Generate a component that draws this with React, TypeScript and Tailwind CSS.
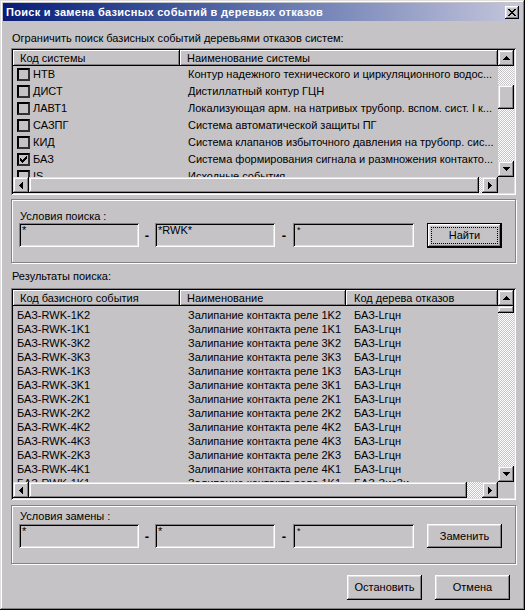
import type { ReactNode } from "react";

const raised = "shadow-[inset_-1px_-1px_#000,inset_1px_1px_#fff,inset_-2px_-2px_#848284,inset_2px_2px_#dedfde]";
const sbRaised = "shadow-[inset_-1px_-1px_#000,inset_1px_1px_#dedfde,inset_-2px_-2px_#848284,inset_2px_2px_#fff]";
const sunken = "shadow-[inset_1px_1px_#848284,inset_-1px_-1px_#fff,inset_2px_2px_#000,inset_-2px_-2px_#dedfde]";
const headerCell = "shadow-[inset_-1px_-1px_#000,inset_1px_1px_#fff,inset_-2px_-2px_#848284]";
const track = "bg-[repeating-conic-gradient(#fff_0%_25%,#c6c3c6_0%_50%)] bg-[length:2px_2px]";

const closeGlyph = ["##....##", ".##..##.", "..####..", "...##...", "..####..", ".##..##.", "##....##"];
const checkGlyph = ["......#", ".....##", "#...###", "##.###.", "#####..", ".###...", "..#...."];

function Pixels({ rows }: { rows: string[] }) {
  return (
    <svg width={rows[0].length} height={rows.length} shapeRendering="crispEdges">
      {rows.flatMap((r, y) =>
        r.split("").map((c, x) => (c === "#" ? <rect key={`${x}-${y}`} x={x} y={y} width={1} height={1} fill="#000" /> : null))
      )}
    </svg>
  );
}

type Dir = "up" | "down" | "left" | "right";

function Arrow({ dir }: { dir: Dir }) {
  const widths = [1, 3, 5, 7];
  if (dir === "up" || dir === "down") {
    return (
      <svg width="7" height="4" shapeRendering="crispEdges">
        {widths.map((w, i) => (
          <rect key={i} x={(7 - w) / 2} y={dir === "up" ? i : 3 - i} width={w} height={1} fill="#000" />
        ))}
      </svg>
    );
  }
  return (
    <svg width="4" height="7" shapeRendering="crispEdges">
      {widths.map((w, i) => (
        <rect key={i} y={(7 - w) / 2} x={dir === "left" ? i : 3 - i} height={w} width={1} fill="#000" />
      ))}
    </svg>
  );
}

function SbButton({ dir }: { dir: Dir }) {
  return (
    <div className={`flex h-4 w-4 shrink-0 items-center justify-center bg-[#c6c3c6] ${sbRaised}`}>
      <Arrow dir={dir} />
    </div>
  );
}

// sizes in px: track before thumb, thumb, track after
function VScroll({ before, thumb, after }: { before: number; thumb: number; after: number }) {
  return (
    <div className="flex w-4 shrink-0 flex-col">
      <SbButton dir="up" />
      <div className={track} style={{ height: before }} />
      <div className={`bg-[#c6c3c6] ${sbRaised}`} style={{ height: thumb }} />
      <div className={track} style={{ height: after }} />
      <SbButton dir="down" />
    </div>
  );
}

function HScroll({ thumb, after }: { thumb: number; after: number }) {
  return (
    <div className="flex h-4 w-[485px]">
      <SbButton dir="left" />
      <div className={`h-4 bg-[#c6c3c6] ${sbRaised}`} style={{ width: thumb }} />
      <div className={`h-4 ${track}`} style={{ width: after }} />
      <SbButton dir="right" />
    </div>
  );
}

function Field({ value, small, w = 120 }: { value: string; small?: boolean; w?: number }) {
  return (
    <div className={`h-[24px] bg-[#c6c3c6] ${sunken} ${small ? "pl-[4px] pt-[3px] text-[9px] leading-[9px]" : "pl-[3px] pt-[1px]"}`} style={{ width: w }}>
      {value}
    </div>
  );
}

function Dash({ w }: { w: number }) {
  return (
    <div className="flex h-[24px] items-center justify-center text-[13px] font-bold" style={{ width: w }}>
      -
    </div>
  );
}

function Button({ children, def, h = 24 }: { children: ReactNode; def?: boolean; h?: number }) {
  if (def) {
    return (
      <div className="relative w-[75px] border border-black bg-[#c6c3c6]" style={{ height: h }}>
        <div className={`flex h-full w-full items-center justify-center ${raised}`}>{children}</div>
        <div className="absolute inset-[3px] border border-dotted border-black" />
      </div>
    );
  }
  return (
    <div className={`flex w-[75px] items-center justify-center bg-[#c6c3c6] ${raised}`} style={{ height: h }}>
      {children}
    </div>
  );
}

const systems = [
  { code: "НТВ", name: "Контур надежного технического и циркуляционного водос...", on: false },
  { code: "ДИСТ", name: "Дистиллатный контур ГЦН", on: false },
  { code: "ЛАВТ1", name: "Локализующая арм. на натривых трубопр. вспом. сист. I к...", on: false },
  { code: "САЗПГ", name: "Система автоматической защиты ПГ", on: false },
  { code: "КИД", name: "Система клапанов избыточного давления на трубопр. сис...", on: false },
  { code: "БАЗ", name: "Система формирования сигнала и размножения контакто...", on: true },
  { code: "IS", name: "Исходные события", on: false },
];

const relays = ["1K2", "1K1", "3K2", "3K3", "1K3", "3K1", "2K1", "2K2", "4K2", "4K3", "2K3", "4K1", "1K1"];

export default function App() {
  return (
    <div className="h-[610px] w-[525px] bg-[#c6c3c6] p-[3px] font-['Liberation_Sans',Arial,sans-serif] text-[11px] leading-[13px] text-black shadow-[inset_-1px_-1px_#000,inset_1px_1px_#dedfde,inset_-2px_-2px_#848284,inset_2px_2px_#fff]">
      {/* title bar */}
      <div className="flex h-[18px] items-center justify-between bg-gradient-to-r from-[#0a1a78] to-[#c6c6dc] pl-[3px] pr-[3px]">
        <span className="font-bold tracking-[0.3px] text-white">Поиск и замена базисных событий в деревьях отказов</span>
        <div className={`flex h-[13px] w-[14px] items-center justify-center bg-[#c6c3c6] ${raised}`}>
          <Pixels rows={closeGlyph} />
        </div>
      </div>

      <div className="pl-[8px]">
        <div className="mt-[11px] pl-[1px]">Ограничить поиск базисных событий деревьями отказов систем:</div>

        {/* systems list */}
        <div className={`mt-[3px] flex h-[147px] w-[505px] flex-col p-[2px] ${sunken}`}>
          <div className="flex h-[127px]">
            <div className="flex w-[485px] flex-col overflow-hidden">
              <div className="flex h-4 shrink-0 leading-[16px]">
                <div className={`w-[167px] pl-[7px] ${headerCell}`}>Код системы</div>
                <div className={`w-[318px] pl-[7px] ${headerCell}`}>Наименование системы</div>
              </div>
              <div className="flex-1 overflow-hidden">
                {systems.map((s) => (
                  <div key={s.code} className="flex h-[17px] shrink-0 items-center whitespace-nowrap">
                    <div className="flex w-[167px] items-center pl-[4px]">
                      <div className="flex h-[13px] w-[13px] items-center justify-center border-2 border-t-black border-l-black border-b-[#313031] border-r-[#313031]">
                        {s.on ? <Pixels rows={checkGlyph} /> : null}
                      </div>
                      <span className="pl-[3px]">{s.code}</span>
                    </div>
                    <div className="w-[318px] overflow-hidden pl-[8px]">{s.name}</div>
                  </div>
                ))}
              </div>
            </div>
            <VScroll before={19} thumb={24} after={52} />
          </div>
          <div className="flex h-4">
            <HScroll thumb={450} after={3} />
            <div className="h-4 w-4" />
          </div>
        </div>

        {/* search conditions */}
        <div className="mt-[4px] h-[64px] w-[505px] border border-[#848284] pl-[7px] pt-[10px] shadow-[inset_1px_1px_#fff,1px_1px_#fff]">
          <div className="pl-[1px]">Условия поиска :</div>
          <div className="flex items-start">
            <Field value="*" />
            <Dash w={16} />
            <Field value="*RWK*" />
            <Dash w={18} />
            <Field value="*" small w={121} />
            <div className="ml-[13px]">
              <Button def h={25}>Найти</Button>
            </div>
          </div>
        </div>

        <div className="mt-[7px] pl-[1px]">Результаты поиска:</div>

        {/* results list */}
        <div className={`mt-[5px] flex h-[212px] w-[505px] flex-col p-[2px] ${sunken}`}>
          <div className="flex h-[192px]">
            <div className="flex w-[485px] flex-col overflow-hidden">
              <div className="flex h-4 shrink-0 leading-[16px]">
                <div className={`w-[167px] pl-[7px] ${headerCell}`}>Код базисного события</div>
                <div className={`w-[166px] pl-[7px] ${headerCell}`}>Наименование</div>
                <div className={`w-[152px] pl-[8px] ${headerCell}`}>Код дерева отказов</div>
              </div>
              <div className="flex-1 overflow-hidden pt-[2px]">
                {relays.map((r, i) => (
                  <div key={i} className="flex h-[14px] shrink-0 whitespace-nowrap leading-[14px]">
                    <div className="w-[167px] pl-[4px]">БАЗ-RWK-{r}</div>
                    <div className="w-[166px] pl-[8px]">Залипание контакта реле {r}</div>
                    <div className="w-[152px] pl-[8px]">{i === 12 ? "БАЗ-Зис3и" : "БАЗ-Lгцн"}</div>
                  </div>
                ))}
              </div>
            </div>
            <VScroll before={0} thumb={7} after={153} />
          </div>
          <div className="flex h-4">
            <HScroll thumb={438} after={15} />
            <div className="h-4 w-4" />
          </div>
        </div>

        {/* replace conditions */}
        <div className="mt-[5px] h-[59px] w-[505px] border border-[#848284] pl-[7px] pt-[4px] shadow-[inset_1px_1px_#fff,1px_1px_#fff]">
          <div className="pl-[1px]">Условия замены :</div>
          <div className="mt-[1px] flex items-start">
            <Field value="*" />
            <Dash w={16} />
            <Field value="*" />
            <Dash w={18} />
            <Field value="*" small w={121} />
            <div className="ml-[13px]">
              <Button>Заменить</Button>
            </div>
          </div>
        </div>

        <div className="mt-[11px] flex justify-end gap-[13px] pr-[12px]">
          <Button h={25}>Остановить</Button>
          <Button h={25}>Отмена</Button>
        </div>
      </div>
    </div>
  );
}
